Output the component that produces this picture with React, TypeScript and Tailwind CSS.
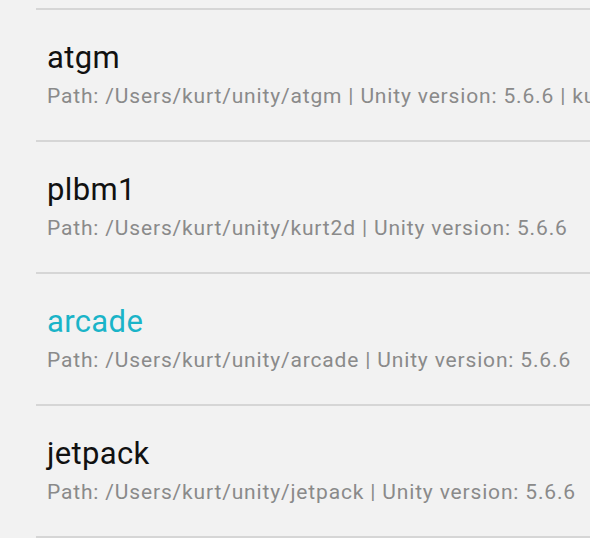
import React from "react";

const items = [
  { name: "atgm", sub: "Path: /Users/kurt/unity/atgm | Unity version: 5.6.6 | kurt", active: false },
  { name: "plbm1", sub: "Path: /Users/kurt/unity/kurt2d | Unity version: 5.6.6", active: false },
  { name: "arcade", sub: "Path: /Users/kurt/unity/arcade | Unity version: 5.6.6", active: true },
  { name: "jetpack", sub: "Path: /Users/kurt/unity/jetpack | Unity version: 5.6.6", active: false },
];

export default function App() {
  return (
    <div
      className="w-[590px] h-[538px] overflow-hidden bg-[#f2f2f2] pl-[36px] pt-[8px]"
      style={{ fontFamily: "Roboto, 'Noto Sans', sans-serif" }}
    >
      {items.map((it) => (
        <div key={it.name} className="border-t-2 border-[#d6d6d6] h-[132px] pl-[11px] pt-[30px] whitespace-nowrap overflow-hidden">
          <div className={`text-[31px] leading-[36px] tracking-[0.35px] ${it.active ? "text-[#1ab4c8]" : "text-[#111111]"}`}>{it.name}</div>
          <div className="text-[21px] leading-[26px] tracking-[0.84px] text-[#8a8a8a] mt-[7px]">{it.sub}</div>
        </div>
      ))}
      <div className="border-t-2 border-[#d6d6d6]" />
    </div>
  );
}
